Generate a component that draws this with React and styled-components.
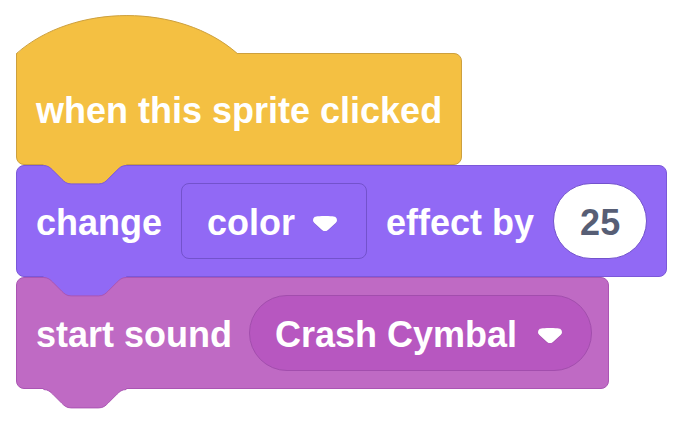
import React from 'react';
import styled, { createGlobalStyle } from 'styled-components';

const GlobalStyle = createGlobalStyle`
    html, body {
        margin: 0;
        padding: 0;
        background: #ffffff;
    }
    body {
        font-family: "Liberation Sans", Arial, sans-serif;
    }
`;

const EVENT = { fill: '#F4C042', stroke: '#CDA03E' };
const LOOKS = { fill: '#9169F5', stroke: '#7B58D9', field: '#7352CC' };
const SOUND = { fill: '#BF6AC4', stroke: '#AA55B3', field: '#B757C0', fieldStroke: '#A24EAD' };

// scratch notch, 2.3x scale
const NOTCH = 'c4.6,0 6.9,2.3 9.2,4.6 l9.2,9.2 c2.3,2.3 4.6,4.6 9.2,4.6 h27.6 c4.6,0 6.9,-2.3 9.2,-4.6 l9.2,-9.2 c2.3,-2.3 4.6,-4.6 9.2,-4.6';

const Tab = ({ fill, stroke, last }) => {
    const y = last ? 1.5 : 2.5;
    return (
        <TabSvg width="86" height="24" viewBox="0 0 86 24" $last={last}>
            <path d={`M0.5,0 L0.5,${y} ${NOTCH} L83.3,0 Z`} fill={fill} />
            <path d={`M0.5,${y} ${NOTCH}`} fill="none" stroke={stroke} strokeWidth="1" />
        </TabSvg>
    );
};

const Dome = () => (
    <DomeSvg width="224" height="42" viewBox="0 0 224 42">
        <path d="M1,38.5 C58,-12.1 163.8,-12.1 221.3,38.5 L221.3,41 L1,41 Z" fill={EVENT.fill} />
        <path d="M0.5,38.5 C58,-12.1 163.8,-12.1 221.3,38.5" fill="none" stroke={EVENT.stroke} strokeWidth="1" />
    </DomeSvg>
);

const ARROW_PATH =
    'M12.71,2.44A2.41,2.41,0,0,1,12,4.16L8.08,8.08a2.45,2.45,0,0,1-3.45,0L0.72,4.16A2.42,2.42,0,0,1,0,2.44,2.48,2.48,0,0,1,.71.71C1,0.47,1.43,0,6.36,0S11.75,0.46,12,.71A2.44,2.44,0,0,1,12.71,2.44Z';

const Arrow = () => (
    <ArrowSvg width="24" height="15" viewBox="0 0 12.71 8.79" preserveAspectRatio="none">
        <path transform="translate(0 0.35)" fill="rgba(0,0,0,0.12)" d={ARROW_PATH} />
        <path fill="#ffffff" d={ARROW_PATH} />
    </ArrowSvg>
);

export default function App() {
    return (
        <>
            <GlobalStyle />
            <Canvas>
                <Block $fill={EVENT.fill} $stroke={EVENT.stroke} $hat $z={3}>
                    <Dome />
                    <Label>when this sprite clicked</Label>
                    <Tab fill={EVENT.fill} stroke={LOOKS.stroke} />
                </Block>
                <Block $fill={LOOKS.fill} $stroke={LOOKS.stroke} $z={2}>
                    <Label>change</Label>
                    <Dropdown $fill={LOOKS.fill} $stroke={LOOKS.field}>
                        <Label>color</Label>
                        <Arrow />
                    </Dropdown>
                    <Label>effect by</Label>
                    <NumberInput $stroke={LOOKS.field}>
                        <Label $dark>25</Label>
                    </NumberInput>
                    <Tab fill={LOOKS.fill} stroke={SOUND.stroke} />
                </Block>
                <Block $fill={SOUND.fill} $stroke={SOUND.stroke} $z={1} $tight>
                    <Label>start sound</Label>
                    <Dropdown $fill={SOUND.field} $stroke={SOUND.fieldStroke} $round $gap={21}>
                        <Label>Crash Cymbal</Label>
                        <Arrow />
                    </Dropdown>
                    <Tab fill={SOUND.fill} stroke={SOUND.stroke} last />
                </Block>
            </Canvas>
        </>
    );
}

const Canvas = styled.div`
    display: flex;
    flex-direction: column;
    align-items: flex-start;
    box-sizing: border-box;
    width: 680px;
    height: 424px;
    padding: 53px 0 0 16px;
`;

const Block = styled.div`
    position: relative;
    z-index: ${p => p.$z};
    display: flex;
    align-items: center;
    gap: ${p => (p.$tight ? '17px' : '19px')};
    box-sizing: border-box;
    height: 112px;
    padding: 0 ${p => (p.$tight ? '16px' : '19px')} 0 19px;
    background: ${p => p.$fill};
    border: 1px solid ${p => p.$stroke};
    border-radius: ${p => (p.$hat ? '0 8px 8px 8px' : '8px')};
`;

const DomeSvg = styled.svg`
    position: absolute;
    left: -1px;
    top: -39px;
    display: block;
`;

const TabSvg = styled.svg`
    position: absolute;
    left: 26px;
    top: ${p => (p.$last ? '100%' : 'calc(100% - 1px)')};
    display: block;
`;

const Label = styled.span`
    padding-top: 4px;
    font-size: 36px;
    font-weight: 700;
    white-space: nowrap;
    color: ${p => (p.$dark ? '#575E75' : '#ffffff')};
`;

const Dropdown = styled.div`
    display: flex;
    align-items: center;
    gap: ${p => p.$gap || 18}px;
    box-sizing: border-box;
    height: 76px;
    padding: 0 29px 0 25px;
    background: ${p => p.$fill};
    border: 1px solid ${p => p.$stroke};
    border-radius: ${p => (p.$round ? '38px' : '8px')};
`;

const NumberInput = styled.div`
    display: flex;
    align-items: center;
    justify-content: center;
    box-sizing: border-box;
    min-width: 93px;
    height: 76px;
    padding: 0 26px;
    background: #ffffff;
    border: 1px solid ${p => p.$stroke};
    border-radius: 38px;
`;

const ArrowSvg = styled.svg`
    display: block;
    margin-top: 4px;
    flex-shrink: 0;
`;
